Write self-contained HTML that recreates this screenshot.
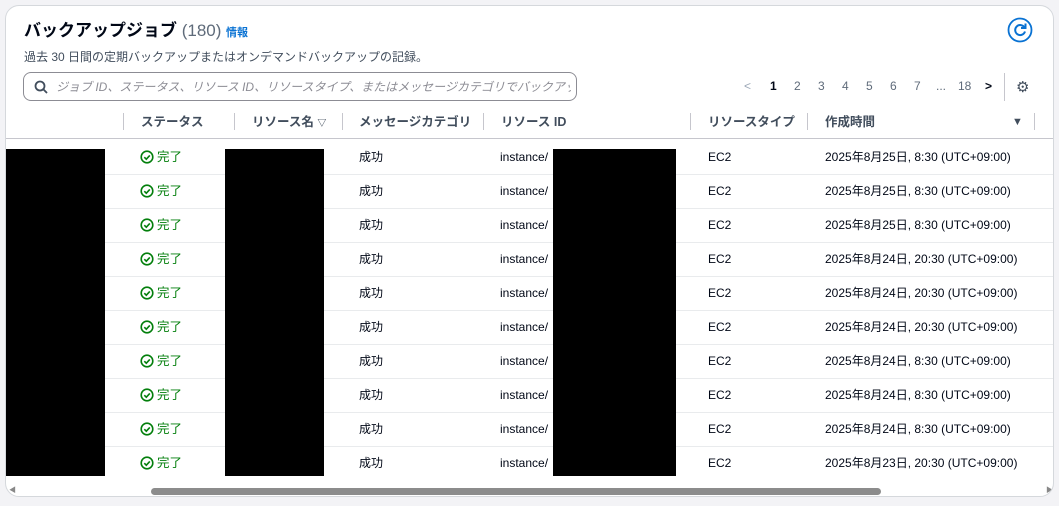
<!DOCTYPE html>
<html><head><meta charset="utf-8"><style>
*{margin:0;padding:0;box-sizing:border-box}
body{width:1059px;height:506px;background:#f3f3f6;font-family:"Liberation Sans","Noto Sans CJK JP",sans-serif;color:#000716;position:relative;overflow:hidden}
.card{position:absolute;left:5px;top:5px;width:1049px;height:492px;background:#fff;border:1px solid #d5d8dc;border-radius:14px;overflow:hidden}
.a{position:absolute;white-space:nowrap;line-height:16px}
.title{left:18px;top:14px;font-size:17px;font-weight:bold;line-height:22px}
.title span{font-weight:normal;color:#5f6b7a}
.info{left:220px;top:19px;font-size:11px;color:#0972d3;font-weight:bold}
.desc{left:18px;top:43px;font-size:12px;color:#414d5c}
.search{left:17px;top:66px;width:554px;height:29px;border:1px solid #8c8c94;border-radius:8px;overflow:hidden}
.search .ph{position:absolute;left:32px;top:6px;font-size:12px;color:#8c8c94;font-style:italic;width:515px;overflow:hidden}
.pg{top:72px;font-size:12px;color:#5f6b7a}
.hd{top:108px;font-size:12.5px;font-weight:bold;color:#414d5c}
.sep{position:absolute;top:107px;width:1px;height:17px;background:#c6c6cd}
.line{position:absolute;left:0;width:1049px;height:1px;background:#e9ebed}
.c{font-size:12px;color:#000716}
.ok{color:#037f0c;font-size:12.5px}
.bk{position:absolute;background:#000}
</style></head><body>
<div class="card">
<div class="a title">バックアップジョブ <span>(180)</span></div>
<div class="a info">情報</div>
<svg class="a" style="left:1001px;top:11px" width="26" height="26" viewBox="0 0 26 26"><circle cx="13" cy="13" r="11.5" fill="none" stroke="#0972d3" stroke-width="1.8"/><path d="M17.5 10.5A5 5 0 1 0 18 14.5" fill="none" stroke="#0972d3" stroke-width="2"/><path d="M18.5 6.5v4.5h-4.5" fill="none" stroke="#0972d3" stroke-width="2"/></svg>
<div class="a desc">過去 30 日間の定期バックアップまたはオンデマンドバックアップの記録。</div>
<div class="a search"><svg style="position:absolute;left:10px;top:7px" width="14" height="14" viewBox="0 0 14 14"><circle cx="6" cy="6" r="4.5" fill="none" stroke="#414d5c" stroke-width="1.8"/><path d="M9.3 9.3L13 13" stroke="#414d5c" stroke-width="1.8"/></svg><div class="ph">ジョブ ID、ステータス、リソース ID、リソースタイプ、またはメッセージカテゴリでバックアップ</div></div>
<div class="a pg" style="left:738px;color:#9ba7b6">&lt;</div>
<div class="a pg" style="left:764px;color:#000716;font-weight:bold">1</div>
<div class="a pg" style="left:788px">2</div>
<div class="a pg" style="left:812px">3</div>
<div class="a pg" style="left:836px">4</div>
<div class="a pg" style="left:860px">5</div>
<div class="a pg" style="left:884px">6</div>
<div class="a pg" style="left:908px">7</div>
<div class="a pg" style="left:930px">...</div>
<div class="a pg" style="left:952px">18</div>
<div class="a pg" style="left:979px;color:#000716;font-weight:bold">&gt;</div>
<div class="sep" style="left:998px;top:67px;height:28px"></div>
<div class="a" style="left:1010px;top:74px;font-size:15px;color:#414d5c">⚙</div>
<div class="sep" style="left:117px"></div>
<div class="a hd" style="left:135px">ステータス</div>
<div class="sep" style="left:228px"></div>
<div class="a hd" style="left:246px">リソース名 <span style="font-size:9px">▽</span></div>
<div class="sep" style="left:336px"></div>
<div class="a hd" style="left:353px">メッセージカテゴリ</div>
<div class="sep" style="left:477px"></div>
<div class="a hd" style="left:495px">リソース ID</div>
<div class="sep" style="left:684px"></div>
<div class="a hd" style="left:702px">リソースタイプ</div>
<div class="sep" style="left:801px"></div>
<div class="a hd" style="left:819px">作成時間</div>
<div class="a hd" style="left:1006px;font-size:11px">▼</div>
<div class="sep" style="left:1028px"></div>
<div class="line" style="top:132px;background:#c6c6cd"></div>
<div id="rows"></div>
<div class="bk" style="left:0;top:143px;width:99px;height:327px"></div>
<div class="bk" style="left:219px;top:143px;width:99px;height:327px"></div>
<div class="bk" style="left:547px;top:143px;width:123px;height:327px"></div>
<div class="a" style="left:3px;top:477px;font-size:7px;color:#888">◀</div>
<div class="a" style="left:1040px;top:477px;font-size:7px;color:#888">▶</div>
<div class="a" style="left:145px;top:482px;width:730px;height:7px;border-radius:4px;background:#8c8c8c"></div>
</div>
<script>
var d=["2025年8月25日, 8:30 (UTC+09:00)","2025年8月25日, 8:30 (UTC+09:00)","2025年8月25日, 8:30 (UTC+09:00)","2025年8月24日, 20:30 (UTC+09:00)","2025年8月24日, 20:30 (UTC+09:00)","2025年8月24日, 20:30 (UTC+09:00)","2025年8月24日, 8:30 (UTC+09:00)","2025年8月24日, 8:30 (UTC+09:00)","2025年8月24日, 8:30 (UTC+09:00)","2025年8月23日, 20:30 (UTC+09:00)"];
var h="";
for(var i=0;i<10;i++){var t=143+i*34;
if(i>0)h+='<div class="line" style="top:'+(t-9)+'px"></div>';
h+='<svg class="a" style="left:134px;top:'+(t+1)+'px" width="14" height="14" viewBox="0 0 14 14"><circle cx="7" cy="7" r="5.8" fill="none" stroke="#037f0c" stroke-width="1.6"/><path d="M4.3 7.2l2 2 3.5-3.8" fill="none" stroke="#037f0c" stroke-width="1.6"/></svg>';
h+='<div class="a ok" style="left:151px;top:'+t+'px">完了</div>';
h+='<div class="a c" style="left:353px;top:'+t+'px">成功</div>';
h+='<div class="a c" style="left:494px;top:'+t+'px">instance/</div>';
h+='<div class="a c" style="left:702px;top:'+t+'px">EC2</div>';
h+='<div class="a c" style="left:819px;top:'+t+'px">'+d[i]+'</div>';}
document.getElementById("rows").innerHTML=h;
</script>
</body></html>
